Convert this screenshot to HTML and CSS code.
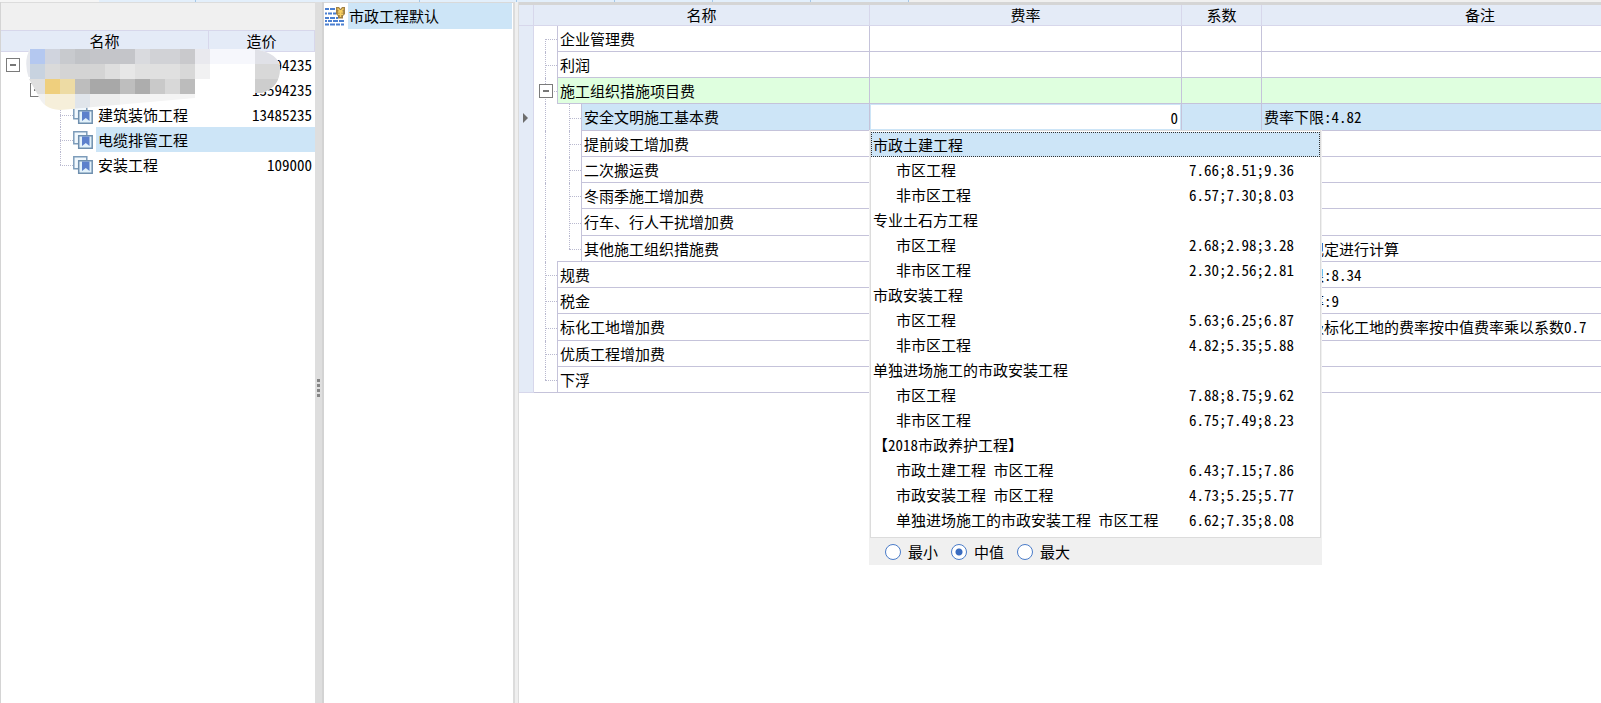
FILE: index.html
```html
<!DOCTYPE html>
<html lang="zh-CN">
<head>
<meta charset="utf-8">
<title>费率设置</title>
<link rel="stylesheet" href="styles.css">
</head>
<body>
<svg class="defs" aria-hidden="true">
  <symbol id="doc" viewBox="0 0 20 18">
    <path d="M.8.8h13v12H.8z" fill="#f1f8fd" stroke="#7d9cba" stroke-width="1.5"/>
    <path d="M5.700 4.800h13.500v12.400H5.700z" fill="#e3f2fb" stroke="#6f8fae" stroke-width="1.5"/>
    <path d="M9 5.500h7.500v9.500l-3.700-3L9 15z" fill="#5c80cc"/>
  </symbol>
  <symbol id="fee" viewBox="0 0 20 19">
    <path d="M0 2h4M5 2h5M0 6.500h2M3 6.500h4M8 6.500h3M0 11h4M5 11h5M11 11h2M0 14h2M3 14h4M8 14h5M14 14h5M0 17.500h4M5 17.500h5M11 17.500h4M16 17.500h3" stroke="#4a7fd0" stroke-width="2.200"/>
    <path d="M11 0h3l1.500 2L17 0h3v7l-2 2v2.500h-5V9l-2-2z" fill="#a08045"/>
    <path d="M12.500 1.500l3 3 3-3M15.500 4.500v5.500M12.800 5h5.400M12.800 7.300h5.400" fill="none" stroke="#f7cf60" stroke-width="1.500"/>
  </symbol>
</svg>
<div class="tabs"><i class="tab-first"></i><i class="tab-on"></i><i class="tab-on"></i><i class="tab-on"></i><i class="tab-on"></i><i class="tab-on"></i><i class="tab-on"></i><i class="tab-on"></i></div>
<main class="app">
  <section class="projects">
    <div class="toolbar"></div>
    <table class="project-table">
      <colgroup><col><col class="col-price"></colgroup>
      <thead><tr><th>名称</th><th>造价</th></tr></thead>
      <tbody>
        <tr><td><div class="node root"><button class="toggle" aria-label="折叠"></button></div></td><td class="price">13594235</td></tr>
        <tr><td><div class="node branch"><button class="toggle" aria-label="折叠"></button></div></td><td class="price">13594235</td></tr>
        <tr><td><div class="node leaf"><i class="elbow"></i><svg class="doc"><use href="#doc"/></svg><span>建筑装饰工程</span></div></td><td class="price">13485235</td></tr>
        <tr class="current"><td><div class="node leaf"><i class="elbow"></i><svg class="doc"><use href="#doc"/></svg><span>电缆排管工程</span></div></td><td class="price"></td></tr>
        <tr><td><div class="node leaf"><i class="elbow end"></i><svg class="doc"><use href="#doc"/></svg><span>安装工程</span></div></td><td class="price">109000</td></tr>
      </tbody>
    </table>
    <svg class="mosaic" viewBox="0 0 256 64" aria-hidden="true">
      <defs><clipPath id="blob"><path d="M4 2H228q26 4 26 20 0 18-18 24H169v5L90 58 34 63Q17 62 12 48L3 32Q-3 14 4 2z"/></clipPath></defs>
      <g clip-path="url(#blob)">
        <path d="M0 0h256v64H0z" fill="#fff"/>
        <path d="M0 0h4v30H0z" fill="#e6e8ed"/>
        <path d="M4 0h15v17H4z" fill="#b4c8f0"/><path d="M4 17h15v15H4z" fill="#c8d3e0"/>
        <path d="M19 0h15v17H19z" fill="#d0d4de"/><path d="M34 0h15v17H34z" fill="#c8cace"/><path d="M49 0h15v17H49z" fill="#c1c3c7"/><path d="M64 0h45v17H64z" fill="#c4c5c9"/><path d="M109 0h15v17h-15z" fill="#d9dade"/><path d="M124 0h30v17h-30z" fill="#d1d2d6"/><path d="M154 0h15v17h-15z" fill="#c9c9cc"/><path d="M169 0h15v17h-15z" fill="#e9e9ee"/><path d="M184 0h45v17h-45z" fill="#f6f7fc"/><path d="M229 0h27v17h-27z" fill="#e0e1e7"/>
        <path d="M19 17h15v15H19z" fill="#dadada"/><path d="M34 17h45v15H34z" fill="#d4d4d4"/><path d="M79 17h15v15H79z" fill="#dedede"/><path d="M94 17h15v15H94z" fill="#e7e7e7"/><path d="M109 17h45v15h-45z" fill="#e0e0e0"/><path d="M154 17h15v15h-15z" fill="#d8d8d8"/><path d="M169 17h15v15h-15z" fill="#f1f1f2"/><path d="M229 17h27v15h-27z" fill="#d8d8d8"/>
        <path d="M0 32h19v15H0z" fill="#dfdfdf"/><path d="M19 32h15v15H19z" fill="#efcf7d"/><path d="M34 32h15v15H34z" fill="#eddba4"/><path d="M49 32h15v15H49z" fill="#bdbdbd"/><path d="M64 32h30v15H64z" fill="#a8a8a8"/><path d="M94 32h15v15H94z" fill="#bebebe"/><path d="M109 32h15v15h-15z" fill="#adadad"/><path d="M124 32h15v15h-15z" fill="#c9c9c9"/><path d="M139 32h15v15h-15z" fill="#d8d8d8"/><path d="M154 32h15v15h-15z" fill="#bcbcbc"/><path d="M229 32h27v16h-27z" fill="#cdcdcd"/>
        <path d="M8 47h11v15H8z" fill="#f1f1f1"/><path d="M19 47h30v16H19z" fill="#f6efda"/><path d="M49 47h15v15H49z" fill="#e0e5eb"/><path d="M64 47h30v15H64z" fill="#eee"/><path d="M94 47h75v15H94z" fill="#f4f4f4"/>
      </g>
    </svg>
  </section>
  <div class="splitter"><i></i><i></i><i></i><i></i></div>
  <section class="templates">
    <div class="template"><svg class="fee"><use href="#fee"/></svg><span>市政工程默认</span></div>
  </section>
  <div class="divider"></div>
  <section class="rates">
    <table class="rate-table">
      <colgroup><col class="c-mark"><col class="c-name"><col class="c-rate"><col class="c-factor"><col class="c-note"></colgroup>
      <thead><tr><th></th><th>名称</th><th>费率</th><th>系数</th><th>备注</th></tr></thead>
      <tbody>
        <tr><th></th><td><div class="item"><i class="elbow start"></i><span>企业管理费</span></div></td><td></td><td></td><td></td></tr>
        <tr><th></th><td><div class="item"><i class="elbow"></i><span>利润</span></div></td><td></td><td></td><td></td></tr>
        <tr class="group"><th></th><td><div class="item"><i class="elbow"></i><button class="toggle" aria-label="折叠"></button><span>施工组织措施项目费</span></div></td><td></td><td></td><td></td></tr>
        <tr class="current"><th><i class="pointer"></i></th><td><div class="item"><i class="pipe"></i><i class="elbow"></i><span>安全文明施工基本费</span></div></td><td class="edit"><input aria-label="费率" value="0"></td><td></td><td>费率下限:4.82</td></tr>
        <tr><th></th><td><div class="item"><i class="pipe"></i><i class="elbow"></i><span>提前竣工增加费</span></div></td><td></td><td></td><td></td></tr>
        <tr><th></th><td><div class="item"><i class="pipe"></i><i class="elbow"></i><span>二次搬运费</span></div></td><td></td><td></td><td></td></tr>
        <tr><th></th><td><div class="item"><i class="pipe"></i><i class="elbow"></i><span>冬雨季施工增加费</span></div></td><td></td><td></td><td></td></tr>
        <tr><th></th><td><div class="item"><i class="pipe"></i><i class="elbow"></i><span>行车、行人干扰增加费</span></div></td><td></td><td></td><td></td></tr>
        <tr><th></th><td><div class="item last-child"><i class="pipe"></i><i class="elbow end"></i><span>其他施工组织措施费</span></div></td><td></td><td></td><td>按相关规定进行计算</td></tr>
        <tr><th></th><td><div class="item"><i class="elbow"></i><span>规费</span></div></td><td></td><td></td><td>费率下限:8.34</td></tr>
        <tr><th></th><td><div class="item"><i class="elbow"></i><span>税金</span></div></td><td></td><td></td><td>增值税率:9</td></tr>
        <tr><th></th><td><div class="item"><i class="elbow"></i><span>标化工地增加费</span></div></td><td></td><td></td><td>县市区级标化工地的费率按中值费率乘以系数0.7</td></tr>
        <tr><th></th><td><div class="item"><i class="elbow"></i><span>优质工程增加费</span></div></td><td></td><td></td><td></td></tr>
        <tr class="last"><th></th><td><div class="item"><i class="elbow end"></i><span>下浮</span></div></td><td></td><td></td><td></td></tr>
      </tbody>
    </table>
    <div class="popup">
      <div class="options">
        <div class="option focus">市政土建工程</div>
        <div class="option sub"><span>市区工程</span><span>7.66;8.51;9.36</span></div>
        <div class="option sub"><span>非市区工程</span><span>6.57;7.30;8.03</span></div>
        <div class="option">专业土石方工程</div>
        <div class="option sub"><span>市区工程</span><span>2.68;2.98;3.28</span></div>
        <div class="option sub"><span>非市区工程</span><span>2.30;2.56;2.81</span></div>
        <div class="option">市政安装工程</div>
        <div class="option sub"><span>市区工程</span><span>5.63;6.25;6.87</span></div>
        <div class="option sub"><span>非市区工程</span><span>4.82;5.35;5.88</span></div>
        <div class="option">单独进场施工的市政安装工程</div>
        <div class="option sub"><span>市区工程</span><span>7.88;8.75;9.62</span></div>
        <div class="option sub"><span>非市区工程</span><span>6.75;7.49;8.23</span></div>
        <div class="option">【2018市政养护工程】</div>
        <div class="option sub"><span>市政土建工程 市区工程</span><span>6.43;7.15;7.86</span></div>
        <div class="option sub"><span>市政安装工程 市区工程</span><span>4.73;5.25;5.77</span></div>
        <div class="option sub"><span>单独进场施工的市政安装工程 市区工程</span><span>6.62;7.35;8.08</span></div>
      </div>
      <div class="choices">
        <label><input type="radio" name="level">最小</label>
        <label><input type="radio" name="level" checked>中值</label>
        <label><input type="radio" name="level">最大</label>
      </div>
    </div>
  </section>
</main>
</body>
</html>
```
FILE: styles.css
```css
* { box-sizing: border-box; }
body {
  margin: 0;
  height: 100vh;
  overflow: hidden;
  display: flex;
  flex-direction: column;
  background: #fff;
  color: #000;
  font: 15px/20px "Noto Sans CJK SC", sans-serif;
  font-feature-settings: "hwid";
}
.defs { position: absolute; width: 0; height: 0; }
table { border-collapse: separate; border-spacing: 0; table-layout: fixed; }
th, td { padding: 0; font-weight: 400; white-space: nowrap; }
input, button { font: inherit; font-feature-settings: inherit; margin: 0; padding: 0; }

.tabs { display: flex; height: 2px; background: #f0f0f0; flex: none; }
.tab-first { width: 99px; background: #f5f5f5; }
.tab-on { width: 97px; background: #e3effb; border-right: 1px solid #a5c8e8; }
.tab-on:nth-child(3) { width: 224px; }
.tab-on:nth-child(n+5) { width: 98px; }
.app { display: flex; flex: 1; min-height: 0; }

.toggle {
  width: 14px;
  height: 14px;
  border: 1px solid #7b7b7b;
  border-radius: 0;
  background: linear-gradient(#777, #777) center / 6px 2px no-repeat #fff;
  flex: none;
}

.projects { position: relative; width: 315px; border-left: 1px solid #d4d4d4; flex: none; }
.toolbar { height: 28px; background: #f0f0f0; border-top: 1px solid #dcdcdc; }
.project-table { width: 100%; }
.col-price { width: 106px; }
.project-table th {
  height: 22px;
  line-height: 20px;
  background: #e4ebf7;
  border: 1px solid #d7d7eb;
  border-left-width: 0;
}
.project-table td { height: 25px; }
.node { display: flex; align-items: center; height: 25px; }
.root { padding-left: 5px; }
.branch { padding-left: 29px; }
.leaf { padding-left: 59px; }
.leaf span { flex: 1; padding-left: 2px; line-height: 25px; }
.price { text-align: right; padding-right: 3px; }
.project-table .current span, .project-table .current .price { background: #cde5f7; }
.doc { width: 20px; height: 18px; margin-right: 3px; flex: none; }
.leaf .elbow { width: 13px; }
.mosaic { position: absolute; left: 25px; top: 45px; width: 256px; height: 64px; }

.elbow, .pipe { position: relative; height: 100%; width: 24px; flex: none; }
.elbow::before, .pipe::before {
  content: "";
  position: absolute;
  left: 0;
  top: 0;
  bottom: 0;
  border-left: 1px dotted #b9b9cf;
}
.elbow::after {
  content: "";
  position: absolute;
  left: 0;
  right: 0;
  top: 50%;
  border-top: 1px dotted #b9b9cf;
}
.elbow.start::before { top: 50%; }
.elbow.end::before { bottom: 50%; }

.splitter {
  width: 9px;
  flex: none;
  display: flex;
  flex-direction: column;
  align-items: center;
  justify-content: center;
  gap: 2px;
  padding-top: 70px;
  background: #dedede;
  border-right: 2px solid #d3d3d3;
}
.splitter i { width: 3px; height: 3px; background: #858585; }

.templates { width: 189px; flex: none; border-top: 1px solid #d9d9d9; }
.template { display: flex; align-items: center; height: 26px; padding-right: 1px; }
.template span { flex: 1; line-height: 26px; margin-left: 3px; padding-left: 1px; background: #cde5f7; }
.fee { width: 20px; height: 19px; margin-left: 1px; flex: none; }
.divider { width: 6px; flex: none; background: #efefef; border-left: 2px solid #dcdcdc; border-right: 1px solid #dcdcdc; }

.rates { position: relative; flex: 1; min-width: 0; overflow: hidden; border-top: 3px solid #d5d5d5; }
.rate-table { width: 1180px; }
.c-mark { width: 15px; }
.c-name { width: 336px; }
.c-rate { width: 312px; }
.c-factor { width: 80px; }
.c-note { width: 437px; }
.rate-table th {
  background: #e4ebf7;
  border-right: 1px solid #d7d7eb;
}
.rate-table thead th { height: 21px; border-bottom: 1px solid #d7d7eb; line-height: 20px; }
.rate-table td { height: 26px; border-right: 1px solid #c5c3da; border-bottom: 1px solid #c5c3da; }
.rate-table td:nth-child(2) { border-bottom: 0; }
.rate-table td:nth-child(5) { padding-left: 2px; }
.item { display: flex; align-items: center; height: 26px; padding-left: 11px; position: relative; }
.rate-table tbody tr:nth-child(4n) td, tr:nth-child(4n) .item { height: 27px; }
.item .elbow { width: 12px; }
.item .pipe + .elbow { width: 12px; }
.item span {
  flex: 1;
  align-self: stretch;
  display: flex;
  align-items: center;
  padding-left: 2px;
  border-left: 1px solid #c5c3da;
  border-bottom: 1px solid #c5c3da;
}
.last-child .pipe { background: linear-gradient(#c5c3da, #c5c3da) right bottom / 12px 1px no-repeat; }
.last-child .elbow { background: linear-gradient(#c5c3da, #c5c3da) bottom / 100% 1px no-repeat; }
.last .item { border-bottom: 1px solid #c5c3da; }
.last .item span { border-bottom: 0; }
.last th { border-bottom: 1px solid #d7d7eb; }
.item .toggle { position: absolute; left: 5px; top: 6px; }
.group td:nth-child(n+3), .group span { background: #dfffdf; }
.rate-table .current td:nth-child(n+3), .rate-table .current span { background: #cde5f7; }
.pointer { display: block; margin-left: 4px; width: 0; border: 5px solid transparent; border-left-color: #6d6d6d; border-right: 0; }
.edit { padding: 1px; }
.edit input {
  display: block;
  width: 100%;
  height: 24px;
  padding-right: 2px;
  border: 0;
  outline: 0;
  background: #fff;
  text-align: right;
}

.popup { position: absolute; left: 350px; top: 125px; width: 453px; background: #f0f0f0; }
.options { padding: 1px 0 5px; margin: 0 1px; background: #fff; border: 1px solid #dcdcdc; }
.option { height: 25px; line-height: 25px; padding-left: 2px; }
.option.focus { line-height: 23px; padding-left: 1px; background: #cde5f7; border: 1px dotted #333; }
.sub { display: grid; grid-template-columns: 1fr 131px; padding-left: 25px; }
.choices { display: flex; align-items: center; gap: 13px; height: 27px; padding-left: 16px; }
.choices label { display: flex; align-items: center; gap: 7px; }
.choices input {
  appearance: none;
  width: 16px;
  height: 16px;
  border: 1px solid #4a7cc9;
  border-radius: 50%;
  background: #fff;
}
.choices input:checked { background: radial-gradient(#3a6cc0 3px, #fff 4px); }
```
